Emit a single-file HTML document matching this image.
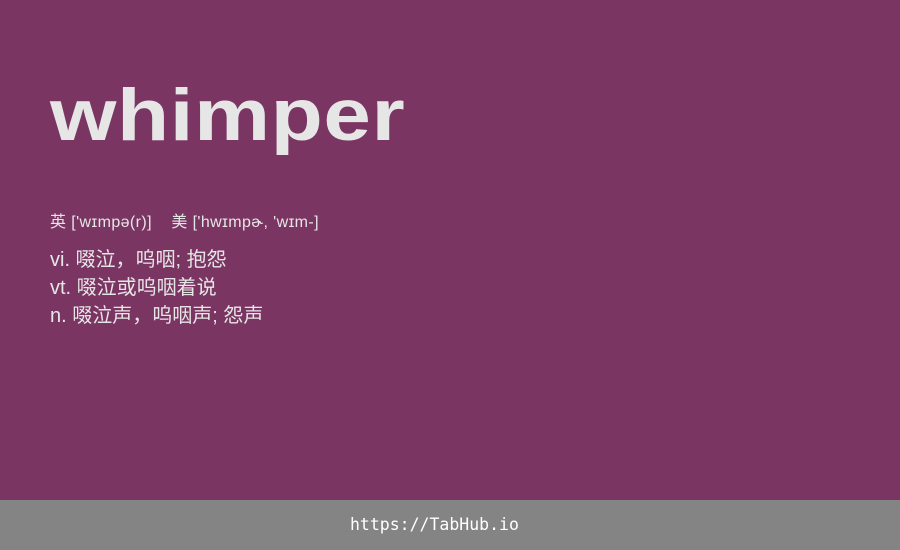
<!DOCTYPE html>
<html><head><meta charset="utf-8"><style>
body{margin:0;width:900px;height:550px;background:#7b3563;position:relative;overflow:hidden;font-family:"Liberation Sans","Noto Sans CJK SC",sans-serif;color:#e6e6e6}
.w{position:absolute;left:50px;top:71px;font-size:73px;font-weight:bold;letter-spacing:0.5px;line-height:90px;transform:scaleX(1.17);transform-origin:0 0}
.ph{position:absolute;left:50px;top:213px;font-size:16px;line-height:20px;white-space:pre;letter-spacing:0.4px}
.d{position:absolute;left:50px;top:246px;font-size:20px;line-height:28px}
.f{position:absolute;left:0;top:500px;width:900px;height:50px;background:#848484}
.f span{position:absolute;left:350px;top:0;color:#fff;font-family:"DejaVu Sans Mono",monospace;font-size:16.5px;line-height:50px}
</style></head><body>
<div class="w">whimper</div>
<div class="ph">英 ['wɪmpə(r)]    美 ['hwɪmpɚ, 'wɪm-]</div>
<div class="d">vi. 啜泣，呜咽; 抱怨<br>vt. 啜泣或呜咽着说<br>n. 啜泣声，呜咽声; 怨声</div>
<div class="f"><span>https://TabHub.io</span></div>
</body></html>
